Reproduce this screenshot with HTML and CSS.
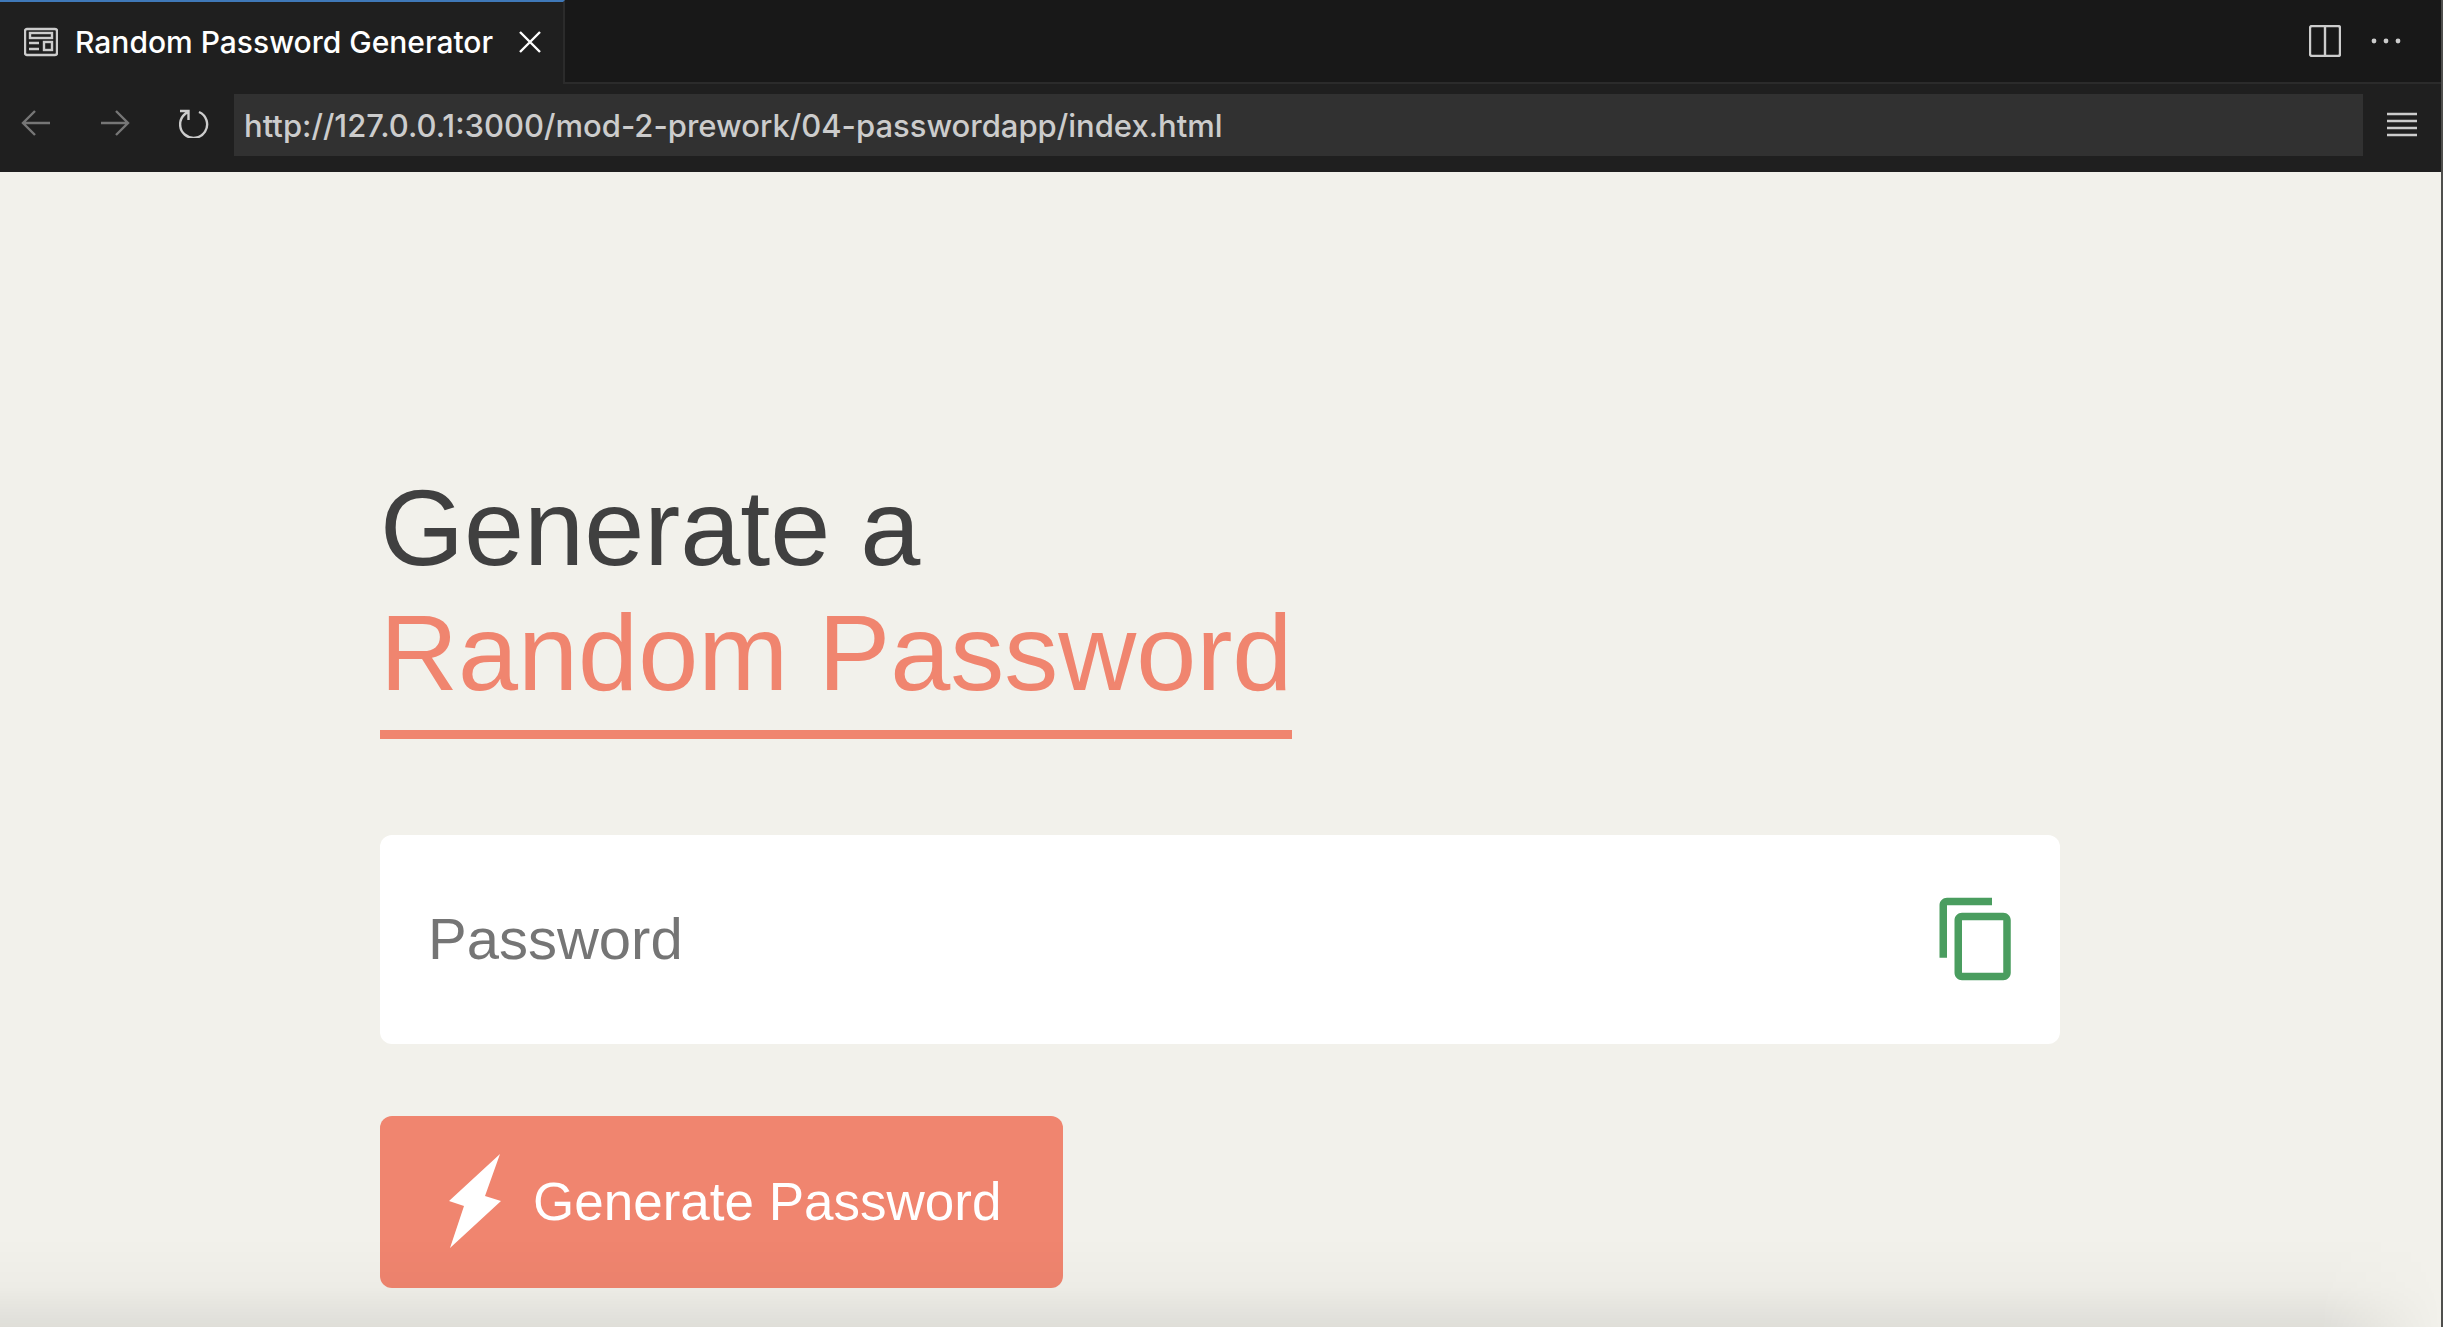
FILE: index.html
```html
<!DOCTYPE html>
<html lang="en">
<head>
<meta charset="utf-8">
<title>Random Password Generator</title>
<link rel="stylesheet" href="styles.css">
</head>
<body>
<div class="window">
  <header class="chrome">
    <div class="tabs">
      <div class="tab">
        <svg class="tab-icon" viewBox="0 0 34 30" aria-hidden="true"><rect x="1" y="2" width="32" height="26" rx="2"/><rect x="6" y="6" width="22" height="5"/><path d="M5 16h10M5 22h10"/><rect x="20" y="15" width="8" height="8"/></svg>
        <span class="tab-title">Random Password Generator</span>
        <button class="icon-button" type="button" aria-label="Close tab">
          <svg class="close" viewBox="0 0 22 22"><path d="M1 1l20 20M21 1L1 21"/></svg>
        </button>
      </div>
      <div class="tab-actions">
        <button class="icon-button" type="button" aria-label="Split editor">
          <svg class="split" viewBox="0 0 32 32"><rect x="1" y="1" width="30" height="30" rx="2"/><path d="M16 1v30"/></svg>
        </button>
        <button class="icon-button" type="button" aria-label="More actions">
          <svg class="dots" viewBox="0 0 30 6"><circle cx="3" cy="3" r="2.4"/><circle cx="15" cy="3" r="2.4"/><circle cx="27" cy="3" r="2.4"/></svg>
        </button>
      </div>
    </div>
    <div class="toolbar">
      <nav class="nav">
        <button class="icon-button" type="button" aria-label="Back" disabled>
          <svg class="nav-icon" viewBox="0 0 30 30"><path d="M29 15H2M14 3L2 15l12 12"/></svg>
        </button>
        <button class="icon-button" type="button" aria-label="Forward" disabled>
          <svg class="nav-icon" viewBox="0 0 30 30"><path d="M1 15h27M16 3l12 12-12 12"/></svg>
        </button>
        <button class="icon-button" type="button" aria-label="Reload">
          <svg class="nav-icon" viewBox="0 0 30 30"><path d="M20 4A13.5 13.5 0 1 1 6 6L9.500 3.500M1 3h8.500v9"/></svg>
        </button>
      </nav>
      <input class="address" type="text" aria-label="Address" value="http://127.0.0.1:3000/mod-2-prework/04-passwordapp/index.html">
      <button class="icon-button menu-button" type="button" aria-label="Menu">
        <svg class="menu" viewBox="0 0 30 26"><path d="M0 2h30M0 9h30M0 16h30M0 23h30"/></svg>
      </button>
    </div>
  </header>
  <main class="page">
    <h1 class="heading">Generate a<br><span class="accent">Random Password</span></h1>
    <div class="field">
      <input class="password" type="text" placeholder="Password" aria-label="Password">
      <button class="icon-button" type="button" aria-label="Copy password">
        <svg class="copy" viewBox="0 0 24 24"><path d="M16 1H4c-1.100 0-2 .9-2 2v14h2V3h12V1zm3 4H8c-1.100 0-2 .9-2 2v14c0 1.100.9 2 2 2h11c1.100 0 2-.9 2-2V7c0-1.100-.9-2-2-2zm0 16H8V7h11v14z"/></svg>
      </button>
    </div>
    <button class="generate" type="button">
      <svg class="bolt" viewBox="0 0 52 94" aria-hidden="true"><path d="M51 0L0 47l15 5L1 94l51-47-16-5z"/></svg>
      Generate Password
    </button>
  </main>
</div>
</body>
</html>
```
FILE: styles.css
```css
* {
  box-sizing: border-box;
}

body {
  margin: 0;
  background: #f2f1eb;
}

.window {
  display: flex;
  flex-direction: column;
  min-height: 100vh;
  border-right: 2px solid #4f4f4d;
}

svg {
  display: block;
  fill: none;
  stroke: #ccc;
  stroke-width: 2.4;
}

.icon-button {
  padding: 0;
  border: 0;
  background: none;
}

.icon-button:disabled {
  opacity: 0.5;
}

/* Editor tabs and address bar */
.chrome {
  background: #1f1f1f;
  font-family: Inter, "Liberation Sans", sans-serif;
  font-weight: 500;
}

.tabs {
  display: flex;
  height: 84px;
}

.tab {
  display: flex;
  align-items: center;
  gap: 17px;
  padding: 0 22px 2px 24px;
  border-top: 2px solid #3f78b8;
  border-right: 2px solid #2b2b2b;
}

.tab-icon {
  width: 34px;
  height: 30px;
}

.tab-title {
  margin-right: 9px;
  color: #fff;
  font-size: 30px;
  line-height: 40px;
  white-space: nowrap;
}

.close {
  width: 22px;
  height: 22px;
  stroke: #fff;
}

.tab-actions {
  flex: 1;
  display: flex;
  align-items: center;
  justify-content: flex-end;
  gap: 30px;
  padding-right: 40px;
  border-bottom: 2px solid #2b2b2b;
  background: #181818;
}

.split {
  width: 32px;
  height: 32px;
}

.dots {
  width: 30px;
  height: 6px;
  fill: #ccc;
  stroke: none;
}

.toolbar {
  display: flex;
  align-items: flex-start;
  height: 88px;
  padding: 10px 24px 0 21px;
}

.nav {
  display: flex;
  align-items: center;
  gap: 49px;
  height: 58px;
  margin-right: 25px;
}

.nav-icon {
  width: 30px;
  height: 30px;
}

.address {
  flex: 1;
  min-width: 0;
  height: 62px;
  padding: 0 10px;
  border: 0;
  background: #313131;
  color: #ccc;
  font-family: inherit;
  font-size: 31px;
  font-weight: inherit;
}

.menu-button {
  margin: 18px 0 0 24px;
}

.menu {
  width: 30px;
  height: 26px;
}

/* Password generator */
.page {
  position: relative;
  flex: 1;
  padding: 293px 381px 39px 380px;
  font-family: Arial, "Liberation Sans", sans-serif;
}

/* Soft shade along the bottom edge */
.page::after {
  content: "";
  position: absolute;
  inset: auto 0 0 0;
  height: 90px;
  background: linear-gradient(transparent, rgba(0, 0, 0, 0.02) 55%, rgba(0, 0, 0, 0.08));
  mask-image: linear-gradient(to left, transparent, #000 120px);
  pointer-events: none;
}

.heading {
  margin: 0 0 96px;
  color: #404040;
  font-size: 108px;
  font-weight: 400;
  line-height: 125px;
}

.accent {
  display: inline-block;
  padding-bottom: 15px;
  border-bottom: 9px solid #f0856f;
  color: #f0856f;
}

.field {
  display: flex;
  align-items: center;
  height: 209px;
  padding: 0 38px 2px 48px;
  border-radius: 12px;
  background: #fff;
}

.password {
  flex: 1;
  min-width: 0;
  padding: 0;
  border: 0;
  background: none;
  font-family: inherit;
  font-size: 58px;
}

.password::placeholder {
  color: #757575;
}

.copy {
  width: 90px;
  height: 90px;
  fill: #4a9d5f;
  stroke: none;
}

.generate {
  display: flex;
  align-items: center;
  gap: 32px;
  height: 172px;
  margin-top: 72px;
  padding: 0 62px 2px 69px;
  border: 0;
  border-radius: 12px;
  background: #f0856f;
  color: #fff;
  font-family: inherit;
  font-size: 53px;
}

.bolt {
  width: 52px;
  height: 94px;
  fill: #fff;
  stroke: none;
}
```
